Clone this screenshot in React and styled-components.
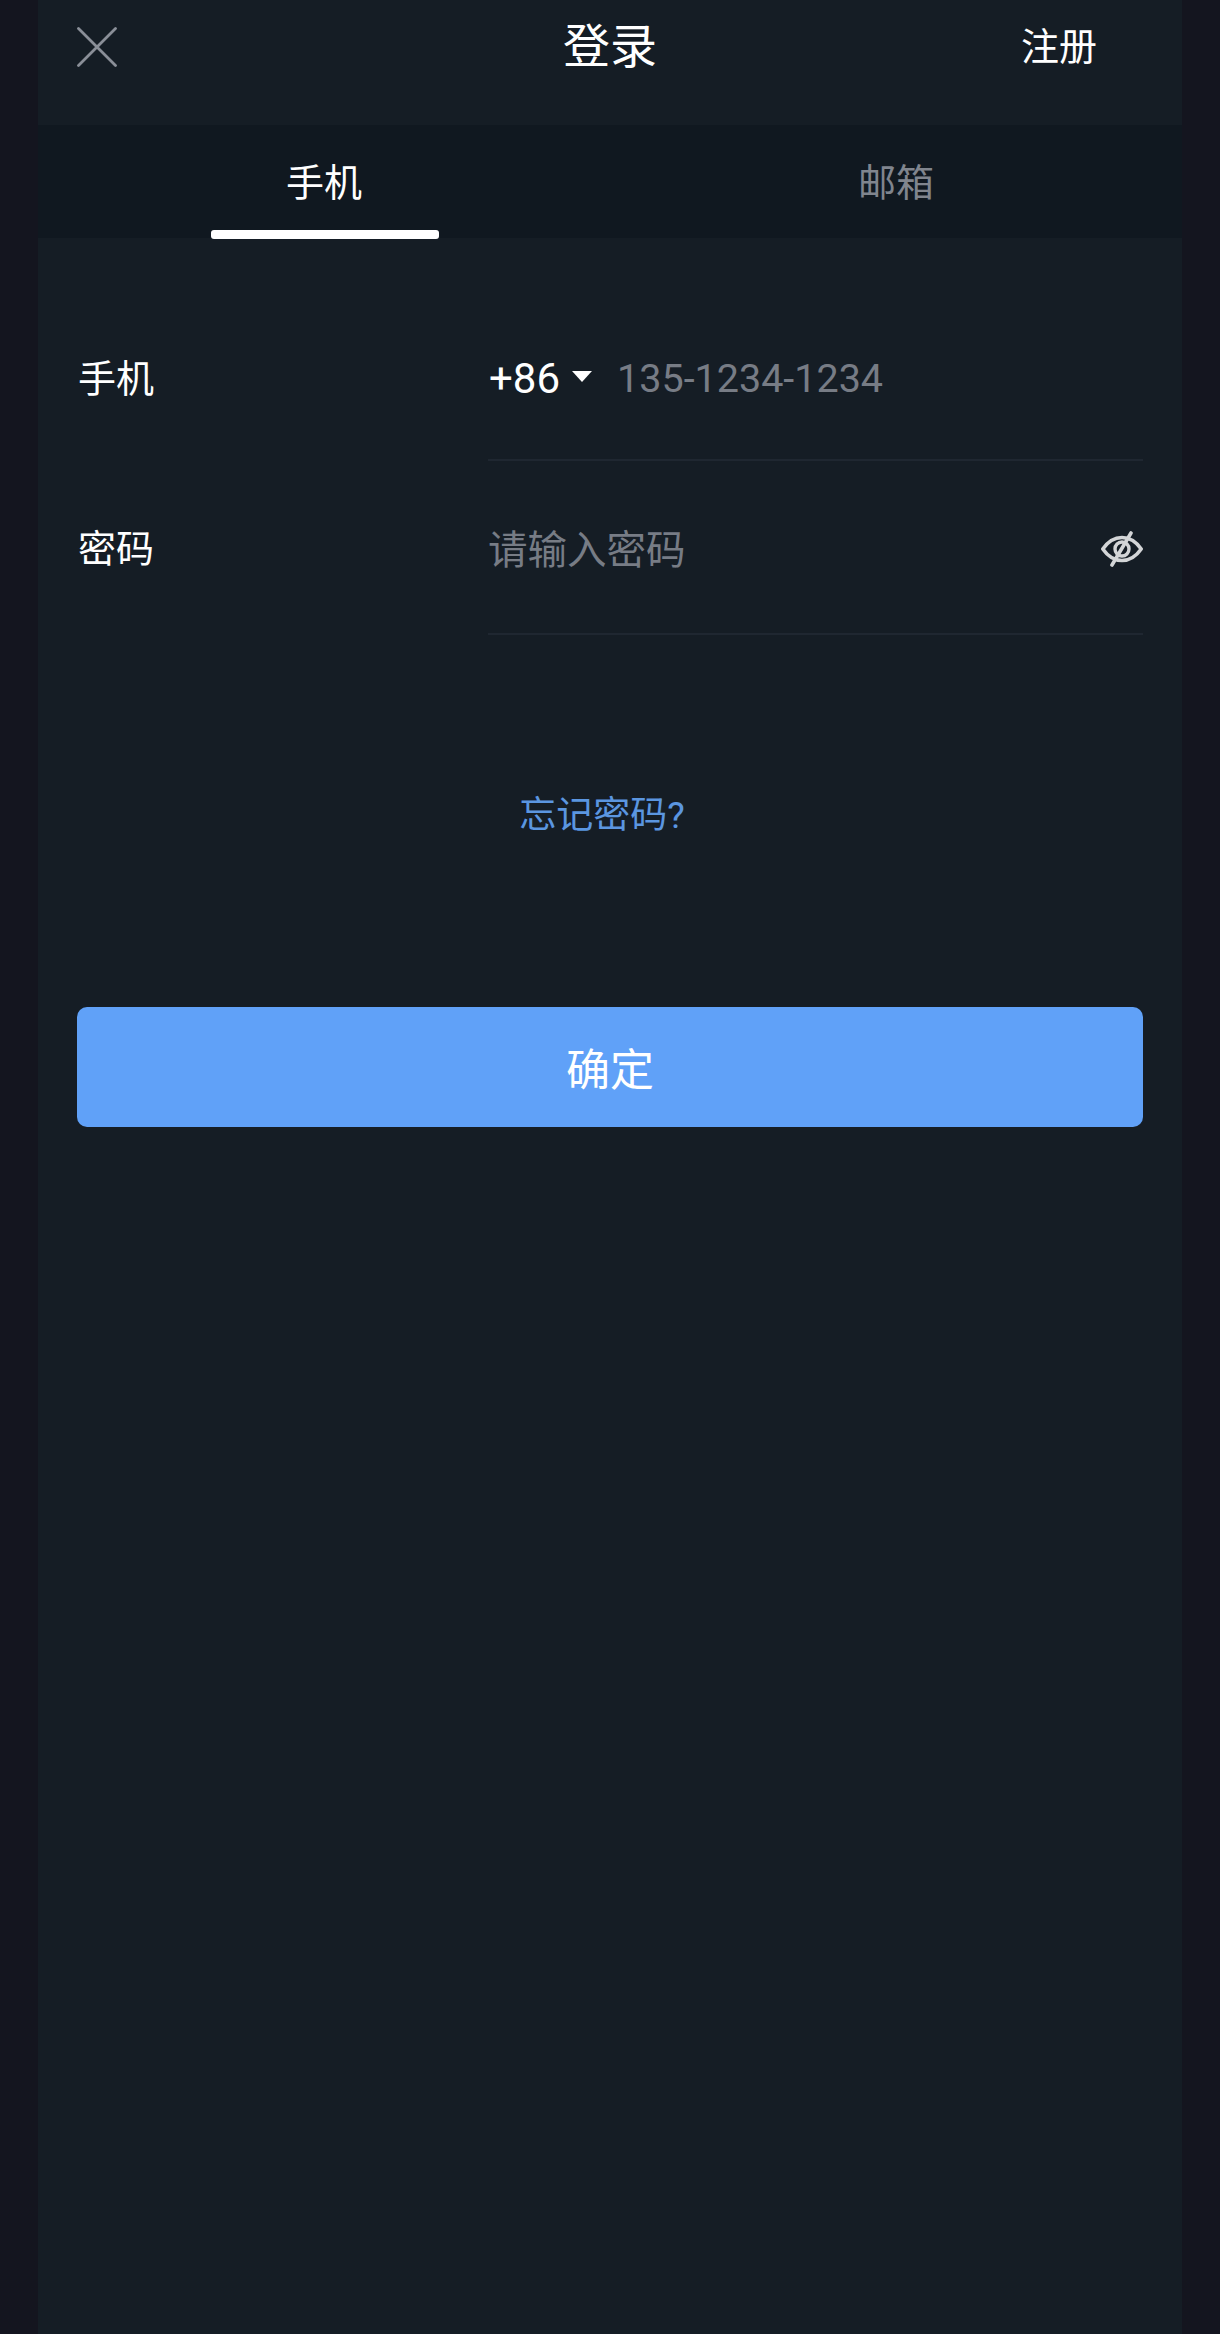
import React from "react";
import styled, { createGlobalStyle } from "styled-components";

const FONT = `"Roboto", "Noto Sans CJK SC", sans-serif`;

const GlobalStyle = createGlobalStyle`
  html, body {
    margin: 0;
    padding: 0;
    background: #14151f;
  }
  * {
    box-sizing: border-box;
  }
`;

function CloseIcon() {
  return (
    <svg width="40" height="40" viewBox="0 0 40 40" fill="none">
      <path
        d="M1.5 1.5L38.5 38.5M38.5 1.5L1.5 38.5"
        stroke="#8a8f98"
        strokeWidth="2.8"
        strokeLinecap="round"
      />
    </svg>
  );
}

function EyeOffIcon() {
  return (
    <svg width="42" height="36" viewBox="0 0 42 36" fill="none">
      <path
        d="M1.8 18C7 10.5 13.5 6.5 21 6.5S35 10.5 40.2 18C35 25.5 28.5 29.5 21 29.5S7 25.5 1.8 18Z"
        stroke="#d3d5d7"
        strokeWidth="3.6"
        strokeLinejoin="round"
      />
      <circle cx="21" cy="18" r="7" stroke="#d3d5d7" strokeWidth="3.4" />
      <path d="M30 2L11 34" stroke="#d3d5d7" strokeWidth="3.6" strokeLinecap="round" />
    </svg>
  );
}

export default function App() {
  return (
    <Panel>
      <GlobalStyle />
      <Header>
        <CloseButton>
          <CloseIcon />
        </CloseButton>
        <Title>登录</Title>
        <RegisterLink>注册</RegisterLink>
      </Header>
      <Tabs>
        <Tab $active>手机</Tab>
        <Tab>邮箱</Tab>
      </Tabs>
      <Form>
        <Row $height={171}>
          <Label $top={64}>手机</Label>
          <Field $top={8}>
            <CountryCode>+86</CountryCode>
            <Caret />
            <Placeholder>135-1234-1234</Placeholder>
          </Field>
        </Row>
        <Row $height={174}>
          <Label $top={63}>密码</Label>
          <Field $top={8}>
            <Placeholder>请输入密码</Placeholder>
            <EyeButton>
              <EyeOffIcon />
            </EyeButton>
          </Field>
        </Row>
        <Forgot>忘记密码?</Forgot>
        <Submit>确定</Submit>
      </Form>
    </Panel>
  );
}

const Panel = styled.div`
  width: 1144px;
  min-height: 2334px;
  margin: 0 38px;
  background: #151d25;
  font-family: ${FONT};
  color: #fff;
`;

const Header = styled.header`
  height: 125px;
  padding: 0 39px 32px;
  display: grid;
  grid-template-columns: 1fr auto 1fr;
  align-items: center;
`;

const CloseButton = styled.div`
  display: flex;
`;

const Title = styled.div`
  font-size: 47px;
  line-height: 60px;
`;

const RegisterLink = styled.div`
  justify-self: end;
  margin-right: 46px;
  font-size: 38px;
  line-height: 50px;
`;

const Tabs = styled.nav`
  height: 113px;
  background: #101820;
  display: grid;
  grid-template-columns: 1fr 1fr;
`;

const Tab = styled.div`
  position: relative;
  padding-top: 33px;
  text-align: center;
  font-size: 38px;
  line-height: 50px;
  color: ${(p) => (p.$active ? "#fff" : "#80858e")};

  &::after {
    content: "";
    display: ${(p) => (p.$active ? "block" : "none")};
    position: absolute;
    left: 173px;
    bottom: -1px;
    width: 228px;
    height: 9px;
    border-radius: 3px;
    background: #fff;
  }
`;

const Form = styled.main`
  padding: 52px 39px 0 40px;
  display: flex;
  flex-direction: column;
`;

const Row = styled.div`
  height: ${(p) => p.$height}px;
  display: grid;
  grid-template-columns: 410px 1fr;
`;

const Label = styled.div`
  padding-top: ${(p) => p.$top}px;
  font-size: 38px;
  line-height: 50px;
`;

const Field = styled.div`
  display: flex;
  align-items: center;
  padding-top: ${(p) => p.$top}px;
  border-bottom: 2px solid #1f2731;
`;

const CountryCode = styled.span`
  margin-left: 1px;
  font-size: 42px;
  line-height: 50px;
`;

const Caret = styled.span`
  width: 0;
  height: 0;
  margin: 0 25px 4px 12px;
  border-left: 10px solid transparent;
  border-right: 10px solid transparent;
  border-top: 11px solid #fff;
`;

const Placeholder = styled.span`
  font-size: 39.5px;
  line-height: 50px;
  color: #777c85;
`;

const EyeButton = styled.div`
  margin: 0 0 5px auto;
  display: flex;
`;

const Forgot = styled.div`
  margin-top: 156px;
  padding-right: 17px;
  text-align: center;
  font-size: 37px;
  line-height: 50px;
  color: #5b96e0;
`;

const Submit = styled.button`
  margin-top: 166px;
  margin-left: -1px;
  height: 120px;
  border: 0;
  border-radius: 10px;
  background: #60a1f8;
  color: #fff;
  font-family: ${FONT};
  font-size: 44px;
`;
